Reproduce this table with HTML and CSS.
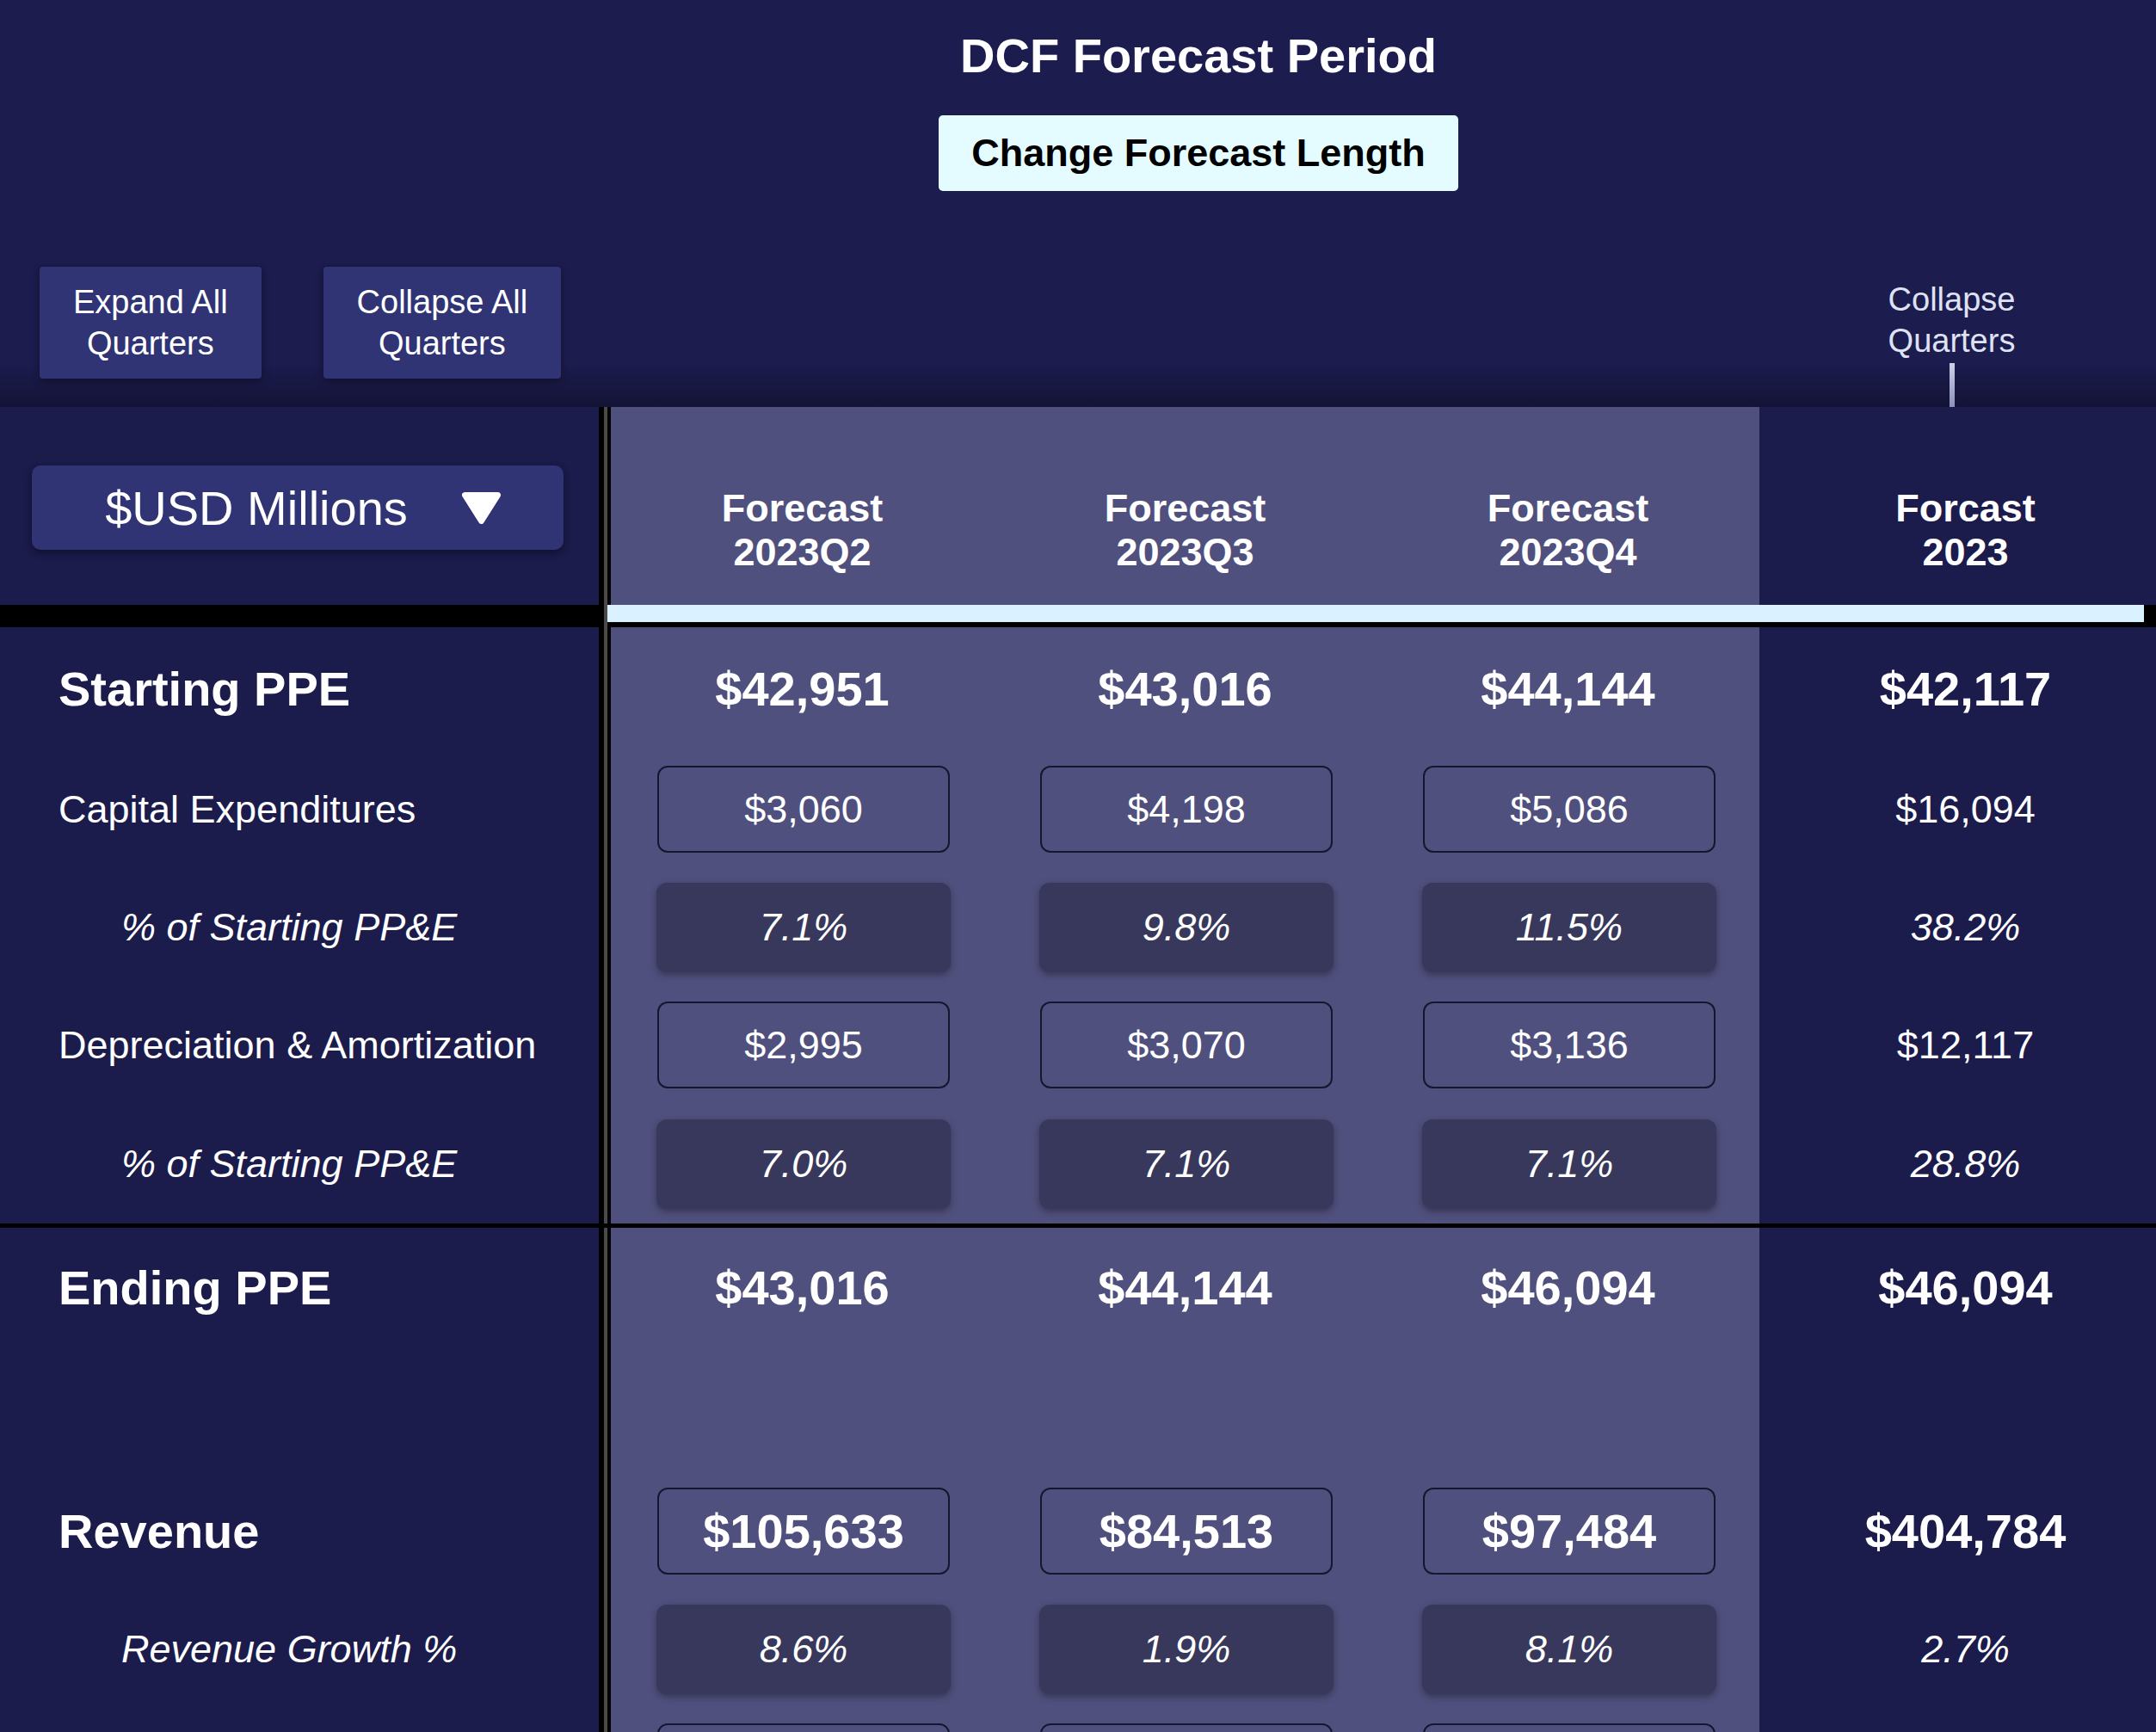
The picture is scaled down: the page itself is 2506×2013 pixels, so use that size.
FILE: index.html
```html
<!DOCTYPE html>
<html lang="en">
<head>
<meta charset="utf-8">
<title>DCF Forecast Period</title>
<link rel="stylesheet" href="styles.css">
</head>
<body>
<div class="page">
  <header class="top">
    <div class="title-block">
      <h1 class="title">DCF Forecast Period</h1>
      <button class="change-btn">Change Forecast Length</button>
    </div>
    <div class="controls">
      <div class="btn-group">
        <button class="ctrl-btn">Expand All<br>Quarters</button>
        <button class="ctrl-btn">Collapse All<br>Quarters</button>
      </div>
      <div class="collapse-q">
        <div class="collapse-q-text">Collapse<br>Quarters</div>
        <div class="collapse-q-line"></div>
      </div>
    </div>
  </header>

  <div class="table">
    <div class="row head">
      <div class="cell label">
        <div class="dropdown">
          <span class="dropdown-text">$USD Millions</span>
          <svg class="dropdown-caret" width="45" height="37" viewBox="0 0 45 37"><polygon points="3.5,3.5 41.5,3.5 22.5,33.5" fill="#fff" stroke="#fff" stroke-width="7" stroke-linejoin="round"/></svg>
        </div>
      </div>
      <div class="cell sep"></div>
      <div class="cell q head-cell">Forecast<br>2023Q2</div>
      <div class="cell q head-cell">Forecast<br>2023Q3</div>
      <div class="cell q head-cell">Forecast<br>2023Q4</div>
      <div class="cell annual head-cell">Forcast<br>2023</div>
    </div>
    <div class="band"><div class="lightbar"></div></div>

    <div class="row h143">
      <div class="cell label big">Starting PPE</div>
      <div class="cell sep"></div>
      <div class="cell q big">$42,951</div>
      <div class="cell q big">$43,016</div>
      <div class="cell q big">$44,144</div>
      <div class="cell annual big">$42,117</div>
    </div>
    <div class="row h137">
      <div class="cell label">Capital Expenditures</div>
      <div class="cell sep"></div>
      <div class="cell q"><div class="box">$3,060</div></div>
      <div class="cell q"><div class="box">$4,198</div></div>
      <div class="cell q"><div class="box">$5,086</div></div>
      <div class="cell annual">$16,094</div>
    </div>
    <div class="row h137">
      <div class="cell label sub">% of Starting PP&amp;E</div>
      <div class="cell sep"></div>
      <div class="cell q"><div class="pbox">7.1%</div></div>
      <div class="cell q"><div class="pbox">9.8%</div></div>
      <div class="cell q"><div class="pbox">11.5%</div></div>
      <div class="cell annual it">38.2%</div>
    </div>
    <div class="row h137">
      <div class="cell label">Depreciation &amp; Amortization</div>
      <div class="cell sep"></div>
      <div class="cell q"><div class="box">$2,995</div></div>
      <div class="cell q"><div class="box">$3,070</div></div>
      <div class="cell q"><div class="box">$3,136</div></div>
      <div class="cell annual">$12,117</div>
    </div>
    <div class="row h139">
      <div class="cell label sub">% of Starting PP&amp;E</div>
      <div class="cell sep"></div>
      <div class="cell q"><div class="pbox">7.0%</div></div>
      <div class="cell q"><div class="pbox">7.1%</div></div>
      <div class="cell q"><div class="pbox">7.1%</div></div>
      <div class="cell annual it">28.8%</div>
    </div>
    <div class="hline"></div>

    <div class="row h138">
      <div class="cell label big">Ending PPE</div>
      <div class="cell sep"></div>
      <div class="cell q big">$43,016</div>
      <div class="cell q big">$44,144</div>
      <div class="cell q big">$46,094</div>
      <div class="cell annual big">$46,094</div>
    </div>
    <div class="row h146">
      <div class="cell label"></div>
      <div class="cell sep"></div>
      <div class="cell q"></div>
      <div class="cell q"></div>
      <div class="cell q"></div>
      <div class="cell annual"></div>
    </div>
    <div class="row h137">
      <div class="cell label big">Revenue</div>
      <div class="cell sep"></div>
      <div class="cell q"><div class="box big">$105,633</div></div>
      <div class="cell q"><div class="box big">$84,513</div></div>
      <div class="cell q"><div class="box big">$97,484</div></div>
      <div class="cell annual big">$404,784</div>
    </div>
    <div class="row h137">
      <div class="cell label sub">Revenue Growth %</div>
      <div class="cell sep"></div>
      <div class="cell q"><div class="pbox">8.6%</div></div>
      <div class="cell q"><div class="pbox">1.9%</div></div>
      <div class="cell q"><div class="pbox">8.1%</div></div>
      <div class="cell annual it">2.7%</div>
    </div>
    <div class="row h137">
      <div class="cell label"></div>
      <div class="cell sep"></div>
      <div class="cell q"><div class="box"></div></div>
      <div class="cell q"><div class="box"></div></div>
      <div class="cell q"><div class="box"></div></div>
      <div class="cell annual"></div>
    </div>
  </div>
</div>
</body>
</html>
```

FILE: styles.css
```css
* { box-sizing: border-box; }

html, body {
  margin: 0;
  padding: 0;
  background: #1b1b4c;
}

body {
  font-family: "Liberation Sans", Arial, sans-serif;
  color: #ffffff;
}

.page {
  width: 2506px;
  height: 2013px;
  overflow: hidden;
}

/* ---------- header ---------- */
.top {
  height: 473px;
  background: linear-gradient(to bottom, #1c1c4f 0, #1c1c4f 89%, #131336 100%);
  display: flex;
  flex-direction: column;
}

.title-block {
  padding-top: 33px;
  padding-left: 280px;
  display: flex;
  flex-direction: column;
  align-items: center;
}

.title {
  margin: 0;
  font-size: 56px;
  line-height: 64px;
  font-weight: 700;
  color: #ffffff;
}

.change-btn {
  margin-top: 37px;
  height: 88px;
  padding: 0 38px;
  border: none;
  border-radius: 5px;
  background: #e4fcff;
  color: #000000;
  font-family: "Liberation Sans", Arial, sans-serif;
  font-size: 45px;
  font-weight: 700;
}

.controls {
  margin-top: 88px;
  display: flex;
  justify-content: space-between;
  align-items: flex-start;
}

.btn-group {
  display: flex;
  gap: 72px;
  padding-left: 46px;
}

.ctrl-btn {
  height: 130px;
  padding: 0 39px;
  border: none;
  border-radius: 4px;
  background: #303475;
  color: #ffffff;
  font-family: "Liberation Sans", Arial, sans-serif;
  font-size: 38px;
  line-height: 48px;
  box-shadow: 0 2px 10px rgba(0, 0, 0, 0.4);
}

.collapse-q {
  width: 461px;
  margin-right: 7px;
  margin-top: 14px;
  display: flex;
  flex-direction: column;
  align-items: center;
}

.collapse-q-text {
  font-size: 38px;
  line-height: 48px;
  text-align: center;
  color: #dfe2f4;
}

.collapse-q-line {
  margin-top: 2px;
  width: 6px;
  height: 51px;
  background: linear-gradient(to bottom, #cfd1ea, #8d90ba);
}

/* ---------- table ---------- */
.row {
  display: grid;
  grid-template-columns: 696px 14px 445px 445px 445px 461px;
}

.cell {
  display: flex;
  align-items: center;
  justify-content: center;
  font-size: 45px;
}

.cell.label {
  justify-content: flex-start;
  padding-left: 68px;
  background: #1b1b4c;
}

.cell.label.sub {
  padding-left: 141px;
  font-style: italic;
}

.cell.sep {
  background: linear-gradient(to right, #000 0, #000 6px, #4a4a4a 6px, #4a4a4a 10px, #000 10px, #000 14px);
}

.cell.q {
  background: #50507e;
}

.cell.annual {
  background: #1b1b4c;
  padding-left: 18px;
}

.it { font-style: italic; }

.big {
  font-size: 56px;
  font-weight: 700;
}

.row.head { height: 230px; }

.row.head .cell.label {
  padding-left: 37px;
}

.head-cell {
  padding-top: 56px;
  font-weight: 700;
  font-size: 45px;
  line-height: 51px;
  text-align: center;
}

.dropdown {
  width: 618px;
  height: 98px;
  margin-top: 4px;
  padding-left: 12px;
  border-radius: 10px;
  background: #303374;
  box-shadow: 0 3px 9px rgba(0, 0, 0, 0.45);
  display: flex;
  align-items: center;
  justify-content: center;
  gap: 63px;
}

.dropdown-text {
  font-size: 56px;
  color: #ffffff;
}

.dropdown-caret { display: block; }

.band {
  height: 26px;
  background: linear-gradient(to right, #000 0, #000 702px, #4a4a4a 702px, #4a4a4a 706px, #000 706px, #000 100%);
  padding-left: 706px;
}

.lightbar {
  width: 1786px;
  height: 20px;
  background: #daf2ff;
}

.h137 { height: 137px; }
.h138 { height: 138px; }
.h139 { height: 139px; }
.h143 { height: 143px; }
.h146 { height: 146px; }

.hline {
  height: 5px;
  background: #000000;
}

.box {
  width: 340px;
  height: 101px;
  margin-left: 3px;
  border: 2px solid #16162f;
  border-radius: 12px;
  display: flex;
  align-items: center;
  justify-content: center;
}

.pbox {
  width: 342px;
  height: 104px;
  margin-left: 3px;
  border-radius: 12px;
  background: #38385d;
  box-shadow: 0 3px 8px rgba(0, 0, 0, 0.35);
  display: flex;
  align-items: center;
  justify-content: center;
  font-style: italic;
}
```
